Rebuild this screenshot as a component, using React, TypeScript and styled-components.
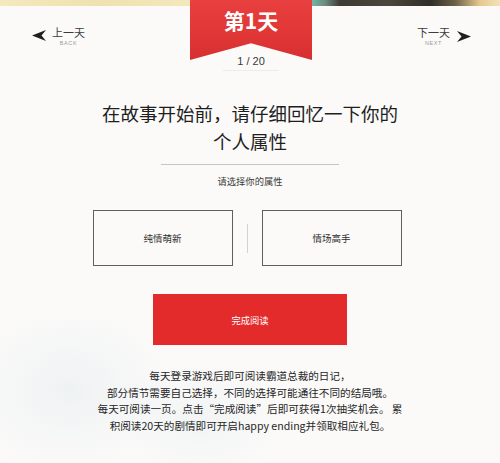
import React from "react";
import styled, { createGlobalStyle } from "styled-components";

const GlobalStyle = createGlobalStyle`
  html, body {
    margin: 0;
    padding: 0;
    background: #fbfaf9;
  }
  body {
    font-family: "Noto Sans CJK SC", "Noto Sans", sans-serif;
  }
`;

const options = ["纯情萌新", "情场高手"];

const notes = [
  "每天登录游戏后即可阅读霸道总裁的日记，",
  "部分情节需要自己选择，不同的选择可能通往不同的结局哦。",
  "每天可阅读一页。点击“完成阅读”后即可获得1次抽奖机会。 累",
  "积阅读20天的剧情即可开启happy ending并领取相应礼包。",
];

const NavArrow: React.FC<{ dir: "left" | "right" }> = ({ dir }) => (
  <svg width="14" height="11" viewBox="0 0 14 11">
    <polygon
      points={dir === "left" ? "0,5.5 14,0 9.5,5.5 14,11" : "14,5.5 0,0 4.5,5.5 0,11"}
      fill="#1f1f1f"
    />
  </svg>
);

const App: React.FC = () => {
  return (
    <Page>
      <GlobalStyle />
      <Header>
        <NavLink $side="left">
          <NavArrow dir="left" />
          <NavLabel>
            <NavTitle>上一天</NavTitle>
            <NavSub>BACK</NavSub>
          </NavLabel>
        </NavLink>
        <DayBlock>
          <Ribbon>第1天</Ribbon>
          <Progress>1 / 20</Progress>
        </DayBlock>
        <NavLink $side="right">
          <NavLabel>
            <NavTitle>下一天</NavTitle>
            <NavSub>NEXT</NavSub>
          </NavLabel>
          <NavArrow dir="right" />
        </NavLink>
      </Header>

      <Title>
        在故事开始前，请仔细回忆一下你的
        <br />
        个人属性
      </Title>
      <Rule />
      <Hint>请选择你的属性</Hint>

      <Choices>
        <Choice>{options[0]}</Choice>
        <ChoiceDivider />
        <Choice>{options[1]}</Choice>
      </Choices>

      <FinishButton type="button">完成阅读</FinishButton>

      <Notes>
        {notes.map((line) => (
          <p key={line}>{line}</p>
        ))}
      </Notes>
    </Page>
  );
};

const Page = styled.div`
  width: 500px;
  height: 463px;
  overflow: hidden;
  display: flex;
  flex-direction: column;
  align-items: center;
  background:
    radial-gradient(ellipse 150px 120px at 70px 390px, rgba(196, 214, 224, 0.22), transparent 70%),
    radial-gradient(ellipse 120px 90px at 200px 420px, rgba(200, 218, 226, 0.18), transparent 70%),
    #fbfaf9;
`;

const Header = styled.header`
  align-self: stretch;
  height: 75px;
  display: flex;
  justify-content: space-between;
  align-items: flex-start;
  padding: 0 29px 0 32px;
  background:
    linear-gradient(
        90deg,
        #f4e9bd 0%,
        #efe2b0 20%,
        #f3e8bc 37%,
        #f0e4b4 60%,
        #72bba8 62%,
        #6c8c80 65%,
        #3d3b34 68%,
        #4a463c 78%,
        #2f2d28 86%,
        #6d6048 91%,
        #e6c98e 96%,
        #f2e2b8 100%
      )
      top / 100% 6px no-repeat;
`;

const NavLink = styled.a<{ $side: "left" | "right" }>`
  display: flex;
  align-items: center;
  gap: ${(p) => (p.$side === "left" ? "6px" : "7px")};
  margin-top: 26px;
  white-space: nowrap;
  cursor: pointer;
  svg {
    flex: none;
    margin-top: ${(p) => (p.$side === "left" ? "-3px" : "-1px")};
  }
`;

const NavLabel = styled.div`
  display: flex;
  flex-direction: column;
  align-items: center;
`;

const NavTitle = styled.span`
  font-size: 11px;
  line-height: 13px;
  color: #3c3c3c;
`;

const NavSub = styled.span`
  font-family: "Liberation Sans", Arial, sans-serif;
  font-size: 5.5px;
  line-height: 8px;
  letter-spacing: 0.6px;
  color: #9a9a9a;
`;

const DayBlock = styled.div`
  display: flex;
  flex-direction: column;
  align-items: center;
  width: 122px;
`;

const Ribbon = styled.div`
  width: 122px;
  height: 60px;
  box-sizing: border-box;
  padding-top: 8px;
  text-align: center;
  font-size: 21px;
  line-height: 24px;
  font-weight: 700;
  color: #ffffff;
  background: linear-gradient(180deg, #e8403e 0%, #e03636 60%, #d62f30 100%);
  clip-path: polygon(0 0, 100% 0, 100% 100%, 50% 72%, 0 100%);
`;

const Progress = styled.div`
  margin-top: -5px;
  width: 56px;
  padding-bottom: 3px;
  border-bottom: 1px solid #ececec;
  text-align: center;
  font-family: "Liberation Sans", Arial, sans-serif;
  font-size: 11px;
  line-height: 12px;
  color: #3a3a3a;
`;

const Title = styled.h2`
  margin: 24px 0 0;
  font-size: 18.5px;
  line-height: 28px;
  font-weight: 400;
  color: #1e1e1e;
  text-align: center;
`;

const Rule = styled.hr`
  margin: 9px 0 0;
  width: 178px;
  height: 0;
  border: none;
  border-top: 1px solid #c6c6c6;
`;

const Hint = styled.div`
  margin-top: 9px;
  font-size: 9.3px;
  line-height: 14px;
  color: #3a3a3a;
`;

const Choices = styled.div`
  margin: 22px 6px 0 0;
  display: flex;
  align-items: center;
  gap: 14px;
`;

const Choice = styled.button`
  width: 140px;
  height: 56px;
  box-sizing: border-box;
  border: 1px solid #5f5f5f;
  background: transparent;
  font-family: inherit;
  font-size: 9.5px;
  color: #2e2e2e;
  cursor: pointer;
`;

const ChoiceDivider = styled.span`
  width: 1px;
  height: 29px;
  background: #d2d2d2;
`;

const FinishButton = styled.button`
  margin-top: 28px;
  width: 194px;
  height: 51px;
  border: none;
  background: #e32b2c;
  color: #ffffff;
  font-family: inherit;
  font-size: 9.3px;
  cursor: pointer;
`;

const Notes = styled.div`
  margin-top: 23px;
  text-align: center;
  font-size: 10.6px;
  line-height: 16.7px;
  color: #262626;
  p {
    margin: 0;
  }
`;

export default App;
